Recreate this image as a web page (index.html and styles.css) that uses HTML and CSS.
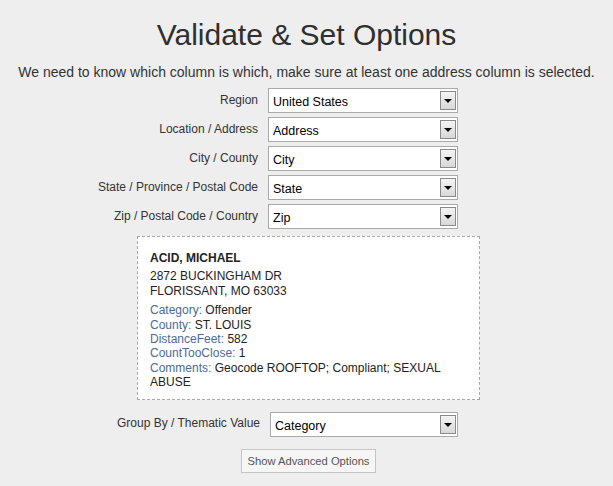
FILE: index.html
```html
<!DOCTYPE html>
<html>
<head>
<meta charset="utf-8">
<link rel="stylesheet" href="styles.css">
</head>
<body>
<div class="page">
  <h1 class="title">Validate &amp; Set Options</h1>
  <p class="intro">We need to know which column is which, make sure at least one address column is selected.</p>
  <div class="form">
    <div class="row"><span class="label">Region</span><div class="select"><span class="value">United States</span><span class="arrow"></span></div></div>
    <div class="row"><span class="label">Location / Address</span><div class="select"><span class="value">Address</span><span class="arrow"></span></div></div>
    <div class="row"><span class="label">City / County</span><div class="select"><span class="value">City</span><span class="arrow"></span></div></div>
    <div class="row"><span class="label">State / Province / Postal Code</span><div class="select"><span class="value">State</span><span class="arrow"></span></div></div>
    <div class="row"><span class="label">Zip / Postal Code / Country</span><div class="select"><span class="value">Zip</span><span class="arrow"></span></div></div>
  </div>
  <div class="card">
    <div class="name">ACID, MICHAEL</div>
    <div class="addr">2872 BUCKINGHAM DR<br>FLORISSANT, MO 63033</div>
    <div class="fields">
      <div><span class="key">Category:</span> Offender</div>
      <div><span class="key">County:</span> ST. LOUIS</div>
      <div><span class="key">DistanceFeet:</span> 582</div>
      <div><span class="key">CountTooClose:</span> 1</div>
      <div><span class="key">Comments:</span> Geocode ROOFTOP; Compliant; SEXUAL<br>ABUSE</div>
    </div>
  </div>
  <div class="form group">
    <div class="row"><span class="label">Group By / Thematic Value</span><div class="select"><span class="value">Category</span><span class="arrow"></span></div></div>
  </div>
  <div class="actions"><button class="btn">Show Advanced Options</button></div>
</div>
</body>
</html>
```

FILE: styles.css
```css
html, body {
  margin: 0;
  padding: 0;
  background: #eeeeee;
}
body {
  font-family: "Liberation Sans", Arial, sans-serif;
  color: #333333;
  width: 613px;
  height: 486px;
  overflow: hidden;
}
.page {
  display: flex;
  flex-direction: column;
  align-items: stretch;
}
.title {
  margin: 17px 0 0 0;
  font-size: 30px;
  font-weight: normal;
  line-height: 36px;
  text-align: center;
  color: #2f2f2f;
}
.intro {
  margin: 11px 0 0 0;
  font-size: 14px;
  line-height: 16px;
  text-align: center;
  color: #333333;
}
.form {
  display: flex;
  flex-direction: column;
  gap: 4px;
  margin-top: 8px;
}
.row {
  display: grid;
  grid-template-columns: 258px 190px;
  column-gap: 10px;
  align-items: center;
}
.label {
  text-align: right;
  font-size: 12px;
  color: #333333;
  padding-bottom: 2px;
}
.select {
  box-sizing: border-box;
  height: 25px;
  background: #ffffff;
  border: 1px solid #a9a9a9;
  display: flex;
  align-items: center;
  justify-content: space-between;
  padding: 0 1px 0 4px;
}
.value {
  font-size: 12.5px;
  color: #000000;
  padding-top: 3px;
}
.arrow {
  box-sizing: border-box;
  width: 16px;
  height: 19px;
  border: 1px solid #8a8a8a;
  background: linear-gradient(#f4f4f4, #d8d8d8);
  position: relative;
}
.arrow::after {
  content: "";
  position: absolute;
  left: 3px;
  top: 7px;
  border-left: 4px solid transparent;
  border-right: 4px solid transparent;
  border-top: 4px solid #000000;
}
.card {
  box-sizing: border-box;
  align-self: flex-start;
  margin: 7px 0 0 137px;
  width: 343px;
  padding: 14px 12px 9px 12px;
  background: #ffffff;
  border: 1px dashed #a8a8a8;
  font-size: 12px;
  line-height: 14.4px;
  color: #222222;
}
.name {
  font-weight: bold;
  margin-bottom: 4px;
}
.addr {
  margin-bottom: 5px;
}
.key {
  color: #4a6b98;
}
.group {
  margin-top: 12px;
}
.group .row {
  grid-template-columns: 260px 188px;
}
.actions {
  display: flex;
  justify-content: center;
  margin-top: 12px;
}
.btn {
  box-sizing: border-box;
  height: 24px;
  width: 135px;
  margin-left: 4px;
  font-family: "Liberation Sans", Arial, sans-serif;
  font-size: 11.2px;
  color: #555555;
  background: #f6f6f6;
  border: 1px solid #c4c4c4;
  padding: 0;
}
```
